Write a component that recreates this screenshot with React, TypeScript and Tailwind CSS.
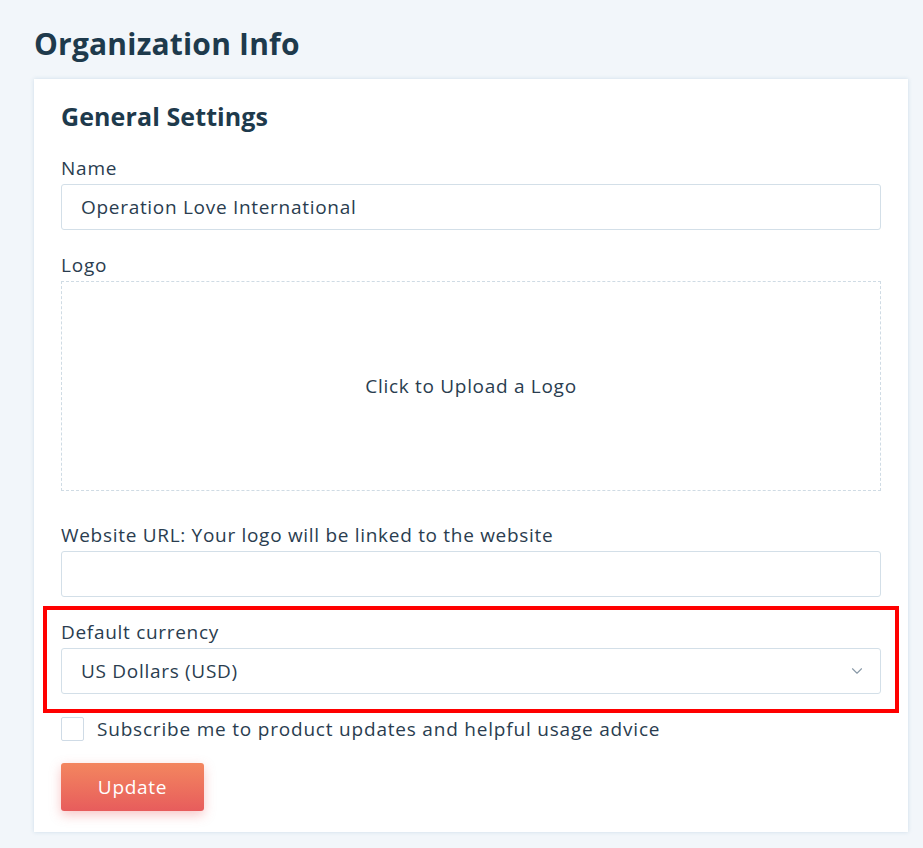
import { ChevronDown } from "lucide-react"

export default function App() {
  return (
    <div
      className="min-h-[848px] bg-[#f2f6fa] pl-[34px] pr-[15px] pt-[22px] text-[#2a3d4f]"
      style={{ fontFamily: "'Open Sans', Lato, sans-serif" }}
    >
      <h1 className="text-[30px] leading-[44px] font-bold text-[#1e3a4c] mb-[13px] tracking-[0.2px]">Organization Info</h1>

      <div className="bg-white shadow-[0_0_4px_rgba(160,190,215,0.45)] px-[27px] pt-[20px] pb-[21px]">
        <h2 className="text-[25px] leading-[34px] font-bold text-[#1e3a4c] tracking-[0.1px]">General Settings</h2>

        {/* Name */}
        <label className="block mt-[23px] text-[19px] leading-[24px] tracking-[0.8px]">Name</label>
        <div className="mt-[4px] h-[46px] border border-[#d3dfe8] rounded-[3px] px-[19px] flex items-center text-[19px] tracking-[0.7px]">
          Operation Love International
        </div>

        {/* Logo */}
        <label className="block mt-[23px] text-[19px] leading-[24px] tracking-[0.8px]">Logo</label>
        <div className="mt-[4px] h-[210px] border border-dashed border-[#cfdbe4] flex items-center justify-center text-[19px] tracking-[0.7px]">
          Click to Upload a Logo
        </div>

        {/* Website */}
        <label className="block mt-[32px] text-[19px] leading-[24px] tracking-[0.7px]">
          Website URL: Your logo will be linked to the website
        </label>
        <div className="mt-[4px] h-[46px] border border-[#d3dfe8] rounded-[3px]" />

        {/* Currency */}
        <div className="mt-[9px] -mx-[18px] border-4 border-[#ff0000] px-[14px] pt-[10px] pb-[15px]">
          <label className="block text-[19px] leading-[24px] tracking-[0.7px]">Default currency</label>
          <div className="mt-[4px] h-[46px] border border-[#d3dfe8] rounded-[3px] pl-[19px] pr-[14px] flex items-center justify-between text-[19px] tracking-[0.7px]">
            <span>US Dollars (USD)</span>
            <ChevronDown className="w-[18px] h-[18px] text-[#8a9aa8]" strokeWidth={1.5} />
          </div>
        </div>

        {/* Subscribe */}
        <div className="mt-[4px] flex items-center gap-[13px]">
          <div className="w-[23px] h-[24px] border border-[#cfdbe6] rounded-[2px] bg-white" />
          <span className="text-[19px] leading-[24px] tracking-[0.8px]">Subscribe me to product updates and helpful usage advice</span>
        </div>

        <button className="mt-[22px] w-[143px] h-[48px] rounded-[3px] bg-gradient-to-b from-[#f3865f] to-[#e75c5c] text-white text-[19px] tracking-[0.7px] shadow-[0_4px_12px_rgba(232,92,92,0.35)]">
          Update
        </button>
      </div>
    </div>
  )
}
